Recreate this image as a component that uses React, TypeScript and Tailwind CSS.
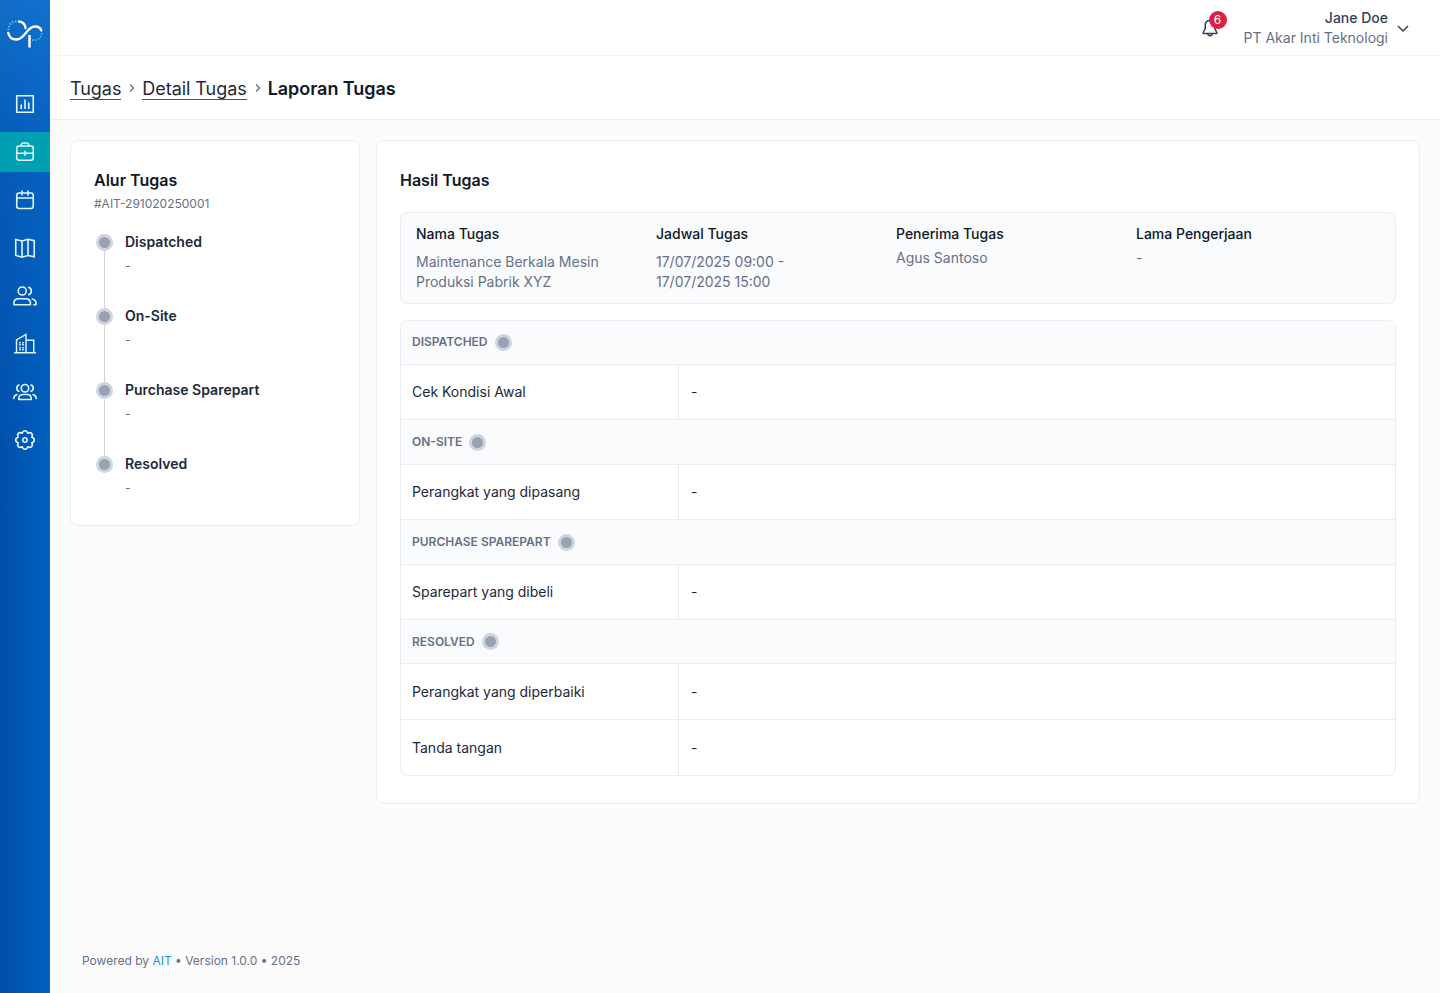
import React from 'react';

interface IconProps {
    children: React.ReactNode;
}

interface Step {
    name: string;
    headClass: string;
    fields: { label: string; value: string; rowClass: string }[];
}

const STEPS: Step[] = [
    {
        name: 'Dispatched',
        headClass: 'h-11 pb-px',
        fields: [{ label: 'Cek Kondisi Awal', value: '-', rowClass: 'h-[55px] border-b' }],
    },
    {
        name: 'On-Site',
        headClass: 'h-[45px]',
        fields: [{ label: 'Perangkat yang dipasang', value: '-', rowClass: 'h-[55px] border-b' }],
    },
    {
        name: 'Purchase Sparepart',
        headClass: 'h-[45px]',
        fields: [{ label: 'Sparepart yang dibeli', value: '-', rowClass: 'h-[55px] border-b' }],
    },
    {
        name: 'Resolved',
        headClass: 'h-11',
        fields: [
            { label: 'Perangkat yang diperbaiki', value: '-', rowClass: 'h-14 border-b' },
            { label: 'Tanda tangan', value: '-', rowClass: 'h-[55px]' },
        ],
    },
];

const INFO = [
    { label: 'Nama Tugas', lines: ['Maintenance Berkala Mesin', 'Produksi Pabrik XYZ'] },
    { label: 'Jadwal Tugas', lines: ['17/07/2025 09:00 -', '17/07/2025 15:00'] },
    { label: 'Penerima Tugas', lines: ['Agus Santoso'] },
    { label: 'Lama Pengerjaan', lines: ['-'] },
];

const Icon = ({ children }: IconProps) => (
    <svg
        className="w-6 h-6"
        viewBox="0 0 24 24"
        fill="none"
        stroke="currentColor"
        strokeWidth="1.6"
        strokeLinecap="round"
        strokeLinejoin="round"
    >
        {children}
    </svg>
);

const NAV = [
    {
        id: 'dashboard',
        icon: (
            <Icon>
                <path d="M3.75 3.75h16.5v16.5H3.75z" strokeLinejoin="miter" />
                <path d="M8.25 12.5V17M12 7.5V17M15.75 10.5V17" strokeLinecap="butt" />
            </Icon>
        ),
    },
    {
        id: 'tugas',
        active: true,
        icon: (
            <Icon>
                <rect x="3.75" y="6" width="16.5" height="14.25" rx="2.25" />
                <path d="M8.25 6V5.25C8.25 4 9.25 3 10.5 3h3c1.25 0 2.25 1 2.25 2.25V6M3.75 13.25h16.5M12 11.25v4" />
            </Icon>
        ),
    },
    {
        id: 'jadwal',
        icon: (
            <Icon>
                <rect x="3.75" y="5" width="16.5" height="15.5" rx="2.25" />
                <path d="M3.75 10h16.5M9 3v4M15 3v4" />
            </Icon>
        ),
    },
    {
        id: 'peta',
        icon: (
            <Icon>
                <path d="M2.75 3.5 9 5l6-1.75 6.25 1.5v16L15 19.5l-6 1.75-6.25-1.75zM9 5v16.25M15 3.25V19.5" strokeLinejoin="miter" />
            </Icon>
        ),
    },
    {
        id: 'pelanggan',
        icon: (
            <Icon>
                <circle cx="9.25" cy="7" r="4" />
                <path d="M15.75 3.25a4 4 0 0 1 0 7.5" />
                <path d="M.9 20.75v-1.5c0-2.75 2-4.5 4.75-4.5h7c2.75 0 4.75 1.75 4.75 4.5v1.5z" />
                <path d="M19.25 15c2.25.5 3.75 2 3.75 4.25v1.5h-2.25" />
            </Icon>
        ),
    },
    {
        id: 'perusahaan',
        icon: (
            <svg className="w-6 h-6" viewBox="0 0 24 24" fill="none" stroke="currentColor" strokeWidth="1.4">
                <path d="M1 20.75h22M3.5 20.75V8l9.5-5.5v18.25M13 8.25h7.75v12.5" />
                <path d="M7 10v3.5M10 10v3.5M7 15v3.5M10 15v3.5" strokeWidth="1.7" strokeDasharray="1.5 .5" />
            </svg>
        ),
    },
    {
        id: 'tim',
        icon: (
            <Icon>
                <circle cx="12" cy="8.25" r="3.75" />
                <path d="M5.75 19.5v-.75c0-2.75 1.75-4.25 4.25-4.25h4c2.5 0 4.25 1.5 4.25 4.25v.75z" />
                <path d="M6 11.25a3.3 3.3 0 0 1 0-6.25M18 11.25A3.3 3.3 0 0 0 18 5M.8 18.5C.8 16.25 2 15 4 14.5M23.2 18.5c0-2.25-1.2-3.5-3.2-4" />
            </Icon>
        ),
    },
    {
        id: 'pengaturan',
        icon: (
            <Icon>
                <circle cx="12" cy="12" r="2.2" />
                <path d="M9.2 5.2C9.7 3.6 10.6 2.7 12 2.7s2.3.9 2.8 2.500c1.500-.8 2.800-.8 3.800.2s1 2.300.2 3.800c1.600.5 2.500 1.400 2.500 2.800s-.9 2.300-2.500 2.800c.8 1.500.8 2.800-.2 3.800s-2.300 1-3.800.2c-.5 1.600-1.400 2.500-2.800 2.500s-2.300-.9-2.800-2.500c-1.500.8-2.800.8-3.800-.2s-1-2.300-.2-3.800c-1.600-.5-2.500-1.400-2.500-2.800s.9-2.300 2.500-2.800c-.8-1.500-.8-2.800.2-3.800s2.300-1 3.800-.2z" />
            </Icon>
        ),
    },
];

const Logo = () => (
    <svg className="w-9 h-8" viewBox="0 0 36 32" fill="none" strokeWidth="2.3">
        <path d="M9.5 5.5C5 5 1.5 8.5 1.3 14" stroke="#4fd1dc" strokeWidth="1.8" strokeDasharray="1.6 1.4" />
        <path d="M12 5.5c3.4.3 6 2.600 6.500 6.500" stroke="#fff" strokeLinecap="round" />
        <path d="M1.300 17c.8 4 4 6.500 8 6.500 9 0 10.300-13 18.500-13 3.300 0 5.800 1.600 6.500 4" stroke="#fff" strokeLinecap="round" />
        <path d="M34.800 17c-.3 4.200-3.300 7.200-7 7.200-1.800 0-3-.4-4.300-1.300" stroke="#38c6c8" strokeWidth="1.800" strokeDasharray="1.600 1.400" />
        <path d="M22.500 19v12.500" stroke="#fff" strokeWidth="2.500" />
    </svg>
);

const StatusDot = () => (
    <span className="block shrink-0 w-[17px] h-[17px] rounded-full border-[3px] border-[#d0d5dd] bg-[#98a2b3]"></span>
);

const Chevron = () => (
    <svg className="w-2 h-3" viewBox="0 0 8 12" fill="none" stroke="#667085" strokeWidth="1.3">
        <path d="m2 2.500 3.500 3.500L2 9.500" />
    </svg>
);

const Sidebar = () => (
    <aside className="flex flex-col w-[50px] shrink-0 bg-[linear-gradient(90deg,#0050ab_0%,#005fbd_100%)]">
        <div className="flex flex-col flex-1 bg-[linear-gradient(180deg,rgba(24,118,210,0.75)_0%,rgba(12,100,196,0.5)_15%,transparent_45%)]">
            <div className="flex justify-center h-[84px] pt-4">
                <Logo />
            </div>
            <nav className="flex flex-col gap-2">
                {NAV.map((item) => (
                    <a
                        key={item.id}
                        className={`flex items-center justify-center h-10 text-[#e0f7ff] ${item.active ? 'bg-[#009fb2]' : ''}`}
                    >
                        {item.icon}
                    </a>
                ))}
            </nav>
        </div>
    </aside>
);

const Header = () => (
    <header className="flex justify-end h-14 shrink-0 bg-white border-b border-[#f3f4f6] pr-[30px]">
        <div className="relative w-6 h-6 mt-4 mr-[22px]">
            <svg className="w-6 h-6" viewBox="0 0 24 24" fill="none" stroke="#344054" strokeWidth="1.5" strokeLinejoin="round">
                <path d="M12 4.5c-3 0-4.800 2.200-4.800 5v3.200L5.200 16.500v.9h13.600v-.9l-2-3.800V9.500c0-2.800-1.800-5-4.800-5z" />
                <path d="M9.7 17.4c.1 1.400 1 2.300 2.300 2.300s2.200-.9 2.300-2.300" />
            </svg>
            <span className="absolute -top-[5px] left-[11px] flex items-center justify-center w-[18px] h-[18px] rounded-full bg-[#dc1f45] text-white text-xs">
                6
            </span>
        </div>
        <div className="flex flex-col items-end pt-2 text-sm leading-5">
            <span className="font-medium text-[#344054]">Jane Doe</span>
            <span className="text-[#667085]">PT Akar Inti Teknologi</span>
        </div>
        <svg className="w-[14px] h-[14px] mt-[22px] ml-2" viewBox="0 0 14 14" fill="none" stroke="#344054" strokeWidth="1.5">
            <path d="m2 4 5 5 5-5" />
        </svg>
    </header>
);

const Breadcrumb = () => (
    <div className="flex items-center h-16 shrink-0 bg-white border-b border-[#eaecf0] pl-5 pt-0.5 text-lg leading-6 tracking-[-0.05px] text-[#1d2939]">
        <a className="border-b border-[#475467] h-[23px]">Tugas</a>
        <span className="ml-[7px] mr-1.5 -mt-0.5"><Chevron /></span>
        <a className="border-b border-[#475467] h-[23px]">Detail Tugas</a>
        <span className="ml-[7px] mr-1.5 -mt-0.5"><Chevron /></span>
        <span className="font-semibold h-[23px] text-[#101828]">Laporan Tugas</span>
    </div>
);

const FlowCard = () => (
    <section className="w-[290px] h-[386px] shrink-0 bg-white border border-[#eaecf0] rounded-lg px-[23px] pt-[27px]">
        <h2 className="text-base font-semibold leading-6 text-[#101828]">Alur Tugas</h2>
        <p className="mt-0.5 text-xs leading-5 text-[#667085]">#AIT-291020250001</p>
        <ol className="mt-5">
            {STEPS.map((step, i) => (
                <li key={step.name} className="flex h-[74px]">
                    <div className="flex flex-col items-center w-[21px]">
                        <StatusDot />
                        {i < STEPS.length - 1 && <div className="w-px flex-1 bg-[#d0d5dd]"></div>}
                    </div>
                    <div className="ml-2.5 -mt-0.5">
                        <div className="text-sm font-semibold leading-5 text-[#1d2939]">{step.name}</div>
                        <div className="mt-1 text-xs leading-5 text-[#667085]">-</div>
                    </div>
                </li>
            ))}
        </ol>
    </section>
);

const ResultCard = () => (
    <section className="flex-1 h-[664px] bg-white border border-[#eaecf0] rounded-lg px-[23px] pt-[27px]">
        <h2 className="text-base font-semibold leading-6 text-[#101828]">Hasil Tugas</h2>

        {/* Task summary */}
        <div className="grid grid-cols-4 mt-5 h-[92px] pl-[15px] pr-[19px] pt-[11px] rounded-lg border border-[#eaecf0] bg-[#f9fbfd] text-sm leading-5">
            {INFO.map((item) => (
                <div key={item.label}>
                    <div className="font-medium text-[#101828]">{item.label}</div>
                    <div className={`text-[#667085] ${item.lines.length > 1 ? 'mt-2' : 'mt-1'}`}>
                        {item.lines.map((line) => (
                            <div key={line}>{line}</div>
                        ))}
                    </div>
                </div>
            ))}
        </div>

        {/* Results per step */}
        <div className="mt-4 rounded-lg border border-[#eaecf0] overflow-hidden">
            {STEPS.map((step) => (
                <React.Fragment key={step.name}>
                    <div className={`flex items-center gap-[7px] pl-[11px] border-b border-[#eaecf0] bg-[#f9fbfd] ${step.headClass}`}>
                        <span className="text-xs font-semibold uppercase text-[#667085]">{step.name}</span>
                        <StatusDot />
                    </div>
                    {step.fields.map((field) => (
                        <div key={field.label} className={`flex text-sm border-[#eaecf0] text-[#1d2939] ${field.rowClass}`}>
                            <div className="flex items-center w-[278px] pl-[11px] border-r border-[#eaecf0]">
                                {field.label}
                            </div>
                            <div className="flex items-center pl-3">{field.value}</div>
                        </div>
                    ))}
                </React.Fragment>
            ))}
        </div>
    </section>
);

export default function App() {
    return (
        <div className="flex h-screen overflow-hidden bg-[#fcfcfd] font-['Inter',sans-serif]">
            <Sidebar />
            <div className="flex flex-col flex-1 min-w-0">
                <Header />
                <Breadcrumb />
                <main className="flex items-start gap-4 p-5 flex-1">
                    <FlowCard />
                    <ResultCard />
                </main>
                <footer className="pl-8 pb-[22px] text-xs leading-5 text-[#667085]">
                    Powered by <span className="text-[#1590d8]">AIT</span> • Version 1.0.0 • 2025
                </footer>
            </div>
        </div>
    );
}
